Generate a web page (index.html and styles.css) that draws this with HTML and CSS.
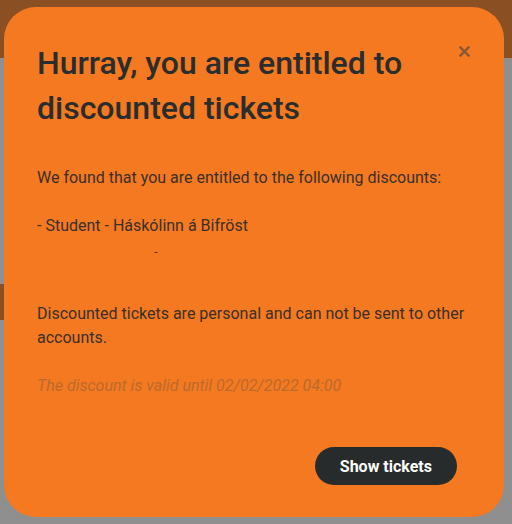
FILE: index.html
```html
<!DOCTYPE html>
<html lang="en">
<head>
    <meta charset="UTF-8">
    <meta name="viewport" content="width=device-width, initial-scale=1.0">
    <title>Discounts</title>
    <link rel="stylesheet" href="styles.css">
</head>
<body>
    <div class="page">
        <div class="topbar"></div>
        <div class="content">
            <div class="side-tab"></div>
        </div>
    </div>

    <div class="modal">
        <button class="close" aria-label="Close">
            <svg width="11" height="11" viewBox="0 0 11 11">
                <path d="M1.5 1.5 L9.5 9.5 M9.5 1.5 L1.5 9.5" stroke="currentColor" stroke-width="2.4" stroke-linecap="square"/>
            </svg>
        </button>
        <h1>Hurray, you are entitled to discounted tickets</h1>
        <p class="intro">We found that you are entitled to the following discounts:</p>
        <div class="discounts">
            <div class="discount">- Student - Háskólinn á Bifröst</div>
            <div class="discount">- eldri borgari - afsláttur</div>
        </div>
        <p class="note">Discounted tickets are personal and can not be sent to other accounts.</p>
        <p class="valid">The discount is valid until 02/02/2022 04:00</p>
        <div class="actions">
            <button class="primary">Show tickets</button>
        </div>
    </div>
</body>
</html>
```

FILE: styles.css
```css
body {
    margin: 0;
    font-family: Roboto, "Liberation Sans", sans-serif;
    background-color: #8f8f8f;
}
.page {
    height: 524px;
    overflow: hidden;
}
.topbar {
    height: 58px;
    background-color: #8b4f24;
}
.content {
    padding-top: 226px;
}
.side-tab {
    width: 6px;
    height: 36px;
    background-color: #8b4f24;
}
.modal {
    position: fixed;
    top: 7px;
    left: 4px;
    width: 500px;
    height: 510px;
    box-sizing: border-box;
    padding: 34px 30px 0 33px;
    background-color: #f47920;
    border-radius: 32px;
    color: #3b3029;
}
.close {
    position: absolute;
    top: 39px;
    right: 34px;
    width: 11px;
    height: 11px;
    padding: 0;
    border: none;
    background: none;
    color: #87573a;
    cursor: pointer;
}
.close svg {
    display: block;
}
h1 {
    margin: 0;
    font-size: 32px;
    font-weight: 500;
    line-height: 45px;
    color: #2a2d2e;
    padding-right: 40px;
}
p {
    margin: 0;
    font-size: 16px;
    line-height: 24px;
}
.intro {
    margin-top: 35px;
}
.discounts {
    margin-top: 24px;
    height: 39px;
    overflow: hidden;
    font-size: 16px;
    line-height: 24px;
}
.discount {
    margin-bottom: 10px;
}
.note {
    margin-top: 49px;
}
.valid {
    margin-top: 24px;
    font-style: italic;
    color: #bb6a2e;
}
.actions {
    display: flex;
    justify-content: flex-end;
    margin-top: 49px;
    padding-right: 17px;
}
.primary {
    height: 38px;
    padding: 0 25px;
    border: none;
    border-radius: 19px;
    background-color: #282b2b;
    color: white;
    font-family: Roboto, "Liberation Sans", sans-serif;
    font-size: 16px;
    font-weight: bold;
    cursor: pointer;
}
```
